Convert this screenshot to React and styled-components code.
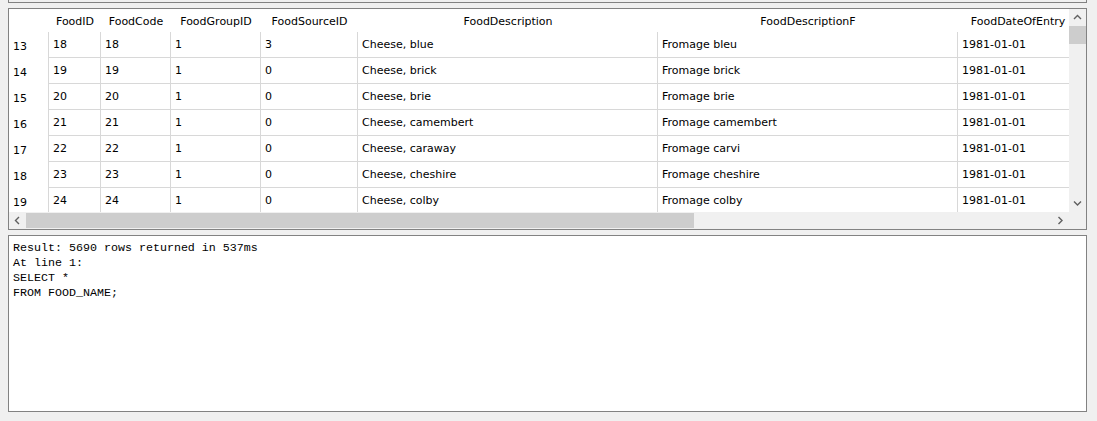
import React from "react";
import styled, { createGlobalStyle } from "styled-components";

const Global = createGlobalStyle`
  html, body { margin: 0; padding: 0; background: #f0f0f0; }
  body { width: 1097px; height: 421px; overflow: hidden; }
`;

const GRID = "#d8d8d8";
const FRAME = "#828282";

const columns = [
  { key: "id", title: "FoodID", width: 52 },
  { key: "code", title: "FoodCode", width: 70 },
  { key: "group", title: "FoodGroupID", width: 90 },
  { key: "source", title: "FoodSourceID", width: 97 },
  { key: "desc", title: "FoodDescription", width: 300 },
  { key: "descF", title: "FoodDescriptionF", width: 300 },
  { key: "date", title: "FoodDateOfEntry", width: 120 },
];

const rows = [
  { n: 13, id: 18, code: 18, group: 1, source: 3, desc: "Cheese, blue", descF: "Fromage bleu" },
  { n: 14, id: 19, code: 19, group: 1, source: 0, desc: "Cheese, brick", descF: "Fromage brick" },
  { n: 15, id: 20, code: 20, group: 1, source: 0, desc: "Cheese, brie", descF: "Fromage brie" },
  { n: 16, id: 21, code: 21, group: 1, source: 0, desc: "Cheese, camembert", descF: "Fromage camembert" },
  { n: 17, id: 22, code: 22, group: 1, source: 0, desc: "Cheese, caraway", descF: "Fromage carvi" },
  { n: 18, id: 23, code: 23, group: 1, source: 0, desc: "Cheese, cheshire", descF: "Fromage cheshire" },
  { n: 19, id: 24, code: 24, group: 1, source: 0, desc: "Cheese, colby", descF: "Fromage colby" },
].map((r) => ({ ...r, date: "1981-01-01" }));

const Page = styled.div`
  width: 1097px;
  height: 421px;
  box-sizing: border-box;
  padding: 0 10px 0 8px;
  display: flex;
  flex-direction: column;
  background: #f0f0f0;
  font-family: "DejaVu Sans", "Liberation Sans", sans-serif;
  font-size: 11px;
  color: #000;
`;

const TopStrip = styled.div`
  height: 3px;
  box-sizing: border-box;
  border: 1px solid ${FRAME};
  border-top: none;
  flex: none;
`;

const TableFrame = styled.div`
  margin-top: 5px;
  border: 1px solid ${FRAME};
  display: grid;
  grid-template-columns: 1060px 17px;
  grid-template-rows: 203px 17px;
  background: #fff;
  flex: none;
`;

const Viewport = styled.div`
  overflow: hidden;
  background: #fff;
  display: flex;
  flex-direction: column;
`;

const Row = styled.div`
  display: flex;
  flex: none;
  height: ${(p) => p.$h}px;
`;

const RowHead = styled.div`
  width: 40px;
  flex: none;
  box-sizing: border-box;
  border-right: ${(p) => (p.$line ? `1px solid ${GRID}` : "none")};
  padding-left: 4px;
  display: flex;
  align-items: center;
  padding-top: 2px;
`;

const HeadCell = styled.div`
  width: ${(p) => p.$w}px;
  flex: none;
  display: flex;
  align-items: center;
  justify-content: center;
  white-space: nowrap;
  overflow: hidden;
  padding-top: 1px;
`;

const Cell = styled.div`
  width: ${(p) => p.$w}px;
  flex: none;
  box-sizing: border-box;
  border-right: 1px solid ${GRID};
  border-bottom: 1px solid ${GRID};
  padding-left: 4px;
  display: flex;
  align-items: center;
  white-space: nowrap;
  overflow: hidden;
`;

const VScroll = styled.div`
  background: #f0f0f0;
  display: flex;
  flex-direction: column;
`;

const HScroll = styled.div`
  background: #f0f0f0;
  display: flex;
  align-items: stretch;
`;

const Corner = styled.div`
  background: #f0f0f0;
`;

const ArrowBtn = styled.div`
  width: 17px;
  height: 17px;
  flex: none;
  display: flex;
  align-items: center;
  justify-content: center;
`;

const Track = styled.div`
  flex: 1;
  display: flex;
  flex-direction: ${(p) => (p.$vertical ? "column" : "row")};
  padding: ${(p) => (p.$vertical ? "0" : "1px 0")};
`;

const Thumb = styled.div`
  background: #cdcdcd;
  flex: none;
`;

const LogPanel = styled.div`
  margin-top: 5px;
  height: 177px;
  box-sizing: border-box;
  border: 1px solid ${FRAME};
  background: #fff;
  padding: 5px 4px;
  font-family: "Liberation Mono", "Courier New", monospace;
  font-size: 11.67px;
  line-height: 15px;
  white-space: pre;
  flex: none;
`;

const Chevron = ({ dir }) => {
  const paths = {
    up: "M1 5 L4.5 1.5 L8 5",
    down: "M1 1.5 L4.5 5 L8 1.5",
    left: "M5 1 L1.5 4.5 L5 8",
    right: "M1.5 1 L5 4.5 L1.5 8",
  };
  const vert = dir === "up" || dir === "down";
  return (
    <svg width={vert ? 9 : 7} height={vert ? 7 : 9} viewBox={vert ? "0 0 9 7" : "0 0 7 9"}>
      <path d={paths[dir]} fill="none" stroke="#606060" strokeWidth="1.4" />
    </svg>
  );
};

export default function App() {
  return (
    <>
      <Global />
      <Page>
        <TopStrip />
        <TableFrame>
          <Viewport>
            <Row $h={23}>
              <RowHead />
              {columns.map((c) => (
                <HeadCell key={c.key} $w={c.width}>
                  {c.title}
                </HeadCell>
              ))}
            </Row>
            {rows.map((r) => (
              <Row key={r.n} $h={26}>
                <RowHead $line>{r.n}</RowHead>
                {columns.map((c) => (
                  <Cell key={c.key} $w={c.width}>
                    {r[c.key]}
                  </Cell>
                ))}
              </Row>
            ))}
          </Viewport>
          <VScroll>
            <ArrowBtn>
              <Chevron dir="up" />
            </ArrowBtn>
            <Track $vertical>
              <Thumb style={{ height: 18 }} />
            </Track>
            <ArrowBtn>
              <Chevron dir="down" />
            </ArrowBtn>
          </VScroll>
          <HScroll>
            <ArrowBtn>
              <Chevron dir="left" />
            </ArrowBtn>
            <Track>
              <Thumb style={{ width: 668 }} />
            </Track>
            <ArrowBtn>
              <Chevron dir="right" />
            </ArrowBtn>
          </HScroll>
          <Corner />
        </TableFrame>
        <LogPanel>
          {"Result: 5690 rows returned in 537ms\nAt line 1:\nSELECT *\nFROM FOOD_NAME;"}
        </LogPanel>
      </Page>
    </>
  );
}
